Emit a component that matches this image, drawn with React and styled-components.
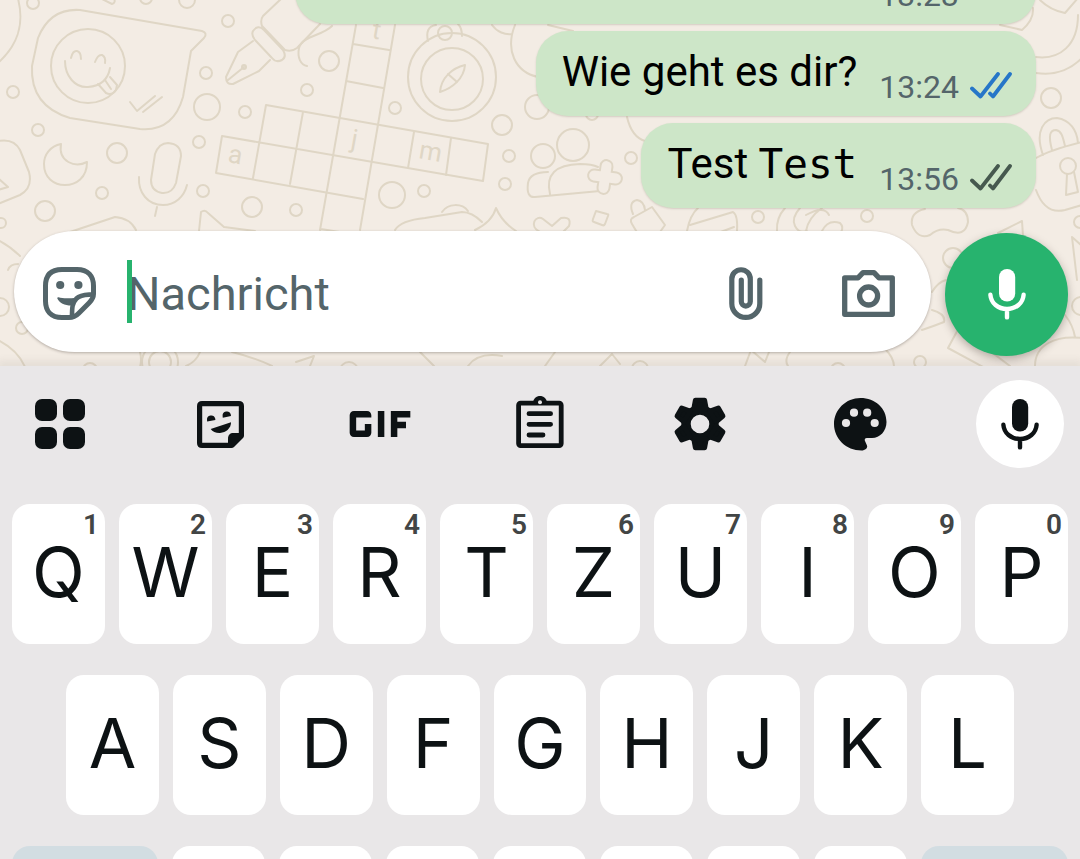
import React from 'react'
import styled, { createGlobalStyle } from 'styled-components'
import { MdGif } from 'react-icons/md'

const colors = {
  wallpaper: '#f3ece4',
  doodle: '#dfd6c5',
  bubble: '#cde6c8',
  grey: '#54656a',
  read: '#2676c8',
  green: '#27b36e',
  keyboard: '#e9e7e8',
  special: '#d2dde2',
  ink: '#0d1214',
}

const GlobalStyle = createGlobalStyle`
  * {
    box-sizing: border-box;
  }
  body {
    margin: 0;
    font-family: Roboto, "Liberation Sans", sans-serif;
  }
  button {
    padding: 0;
    border: 0;
    background: none;
    font-family: inherit;
    cursor: pointer;
  }
  svg {
    display: block;
    flex: none;
  }
`

const Screen = styled.main`
  display: flex;
  flex-direction: column;
  height: 100vh;
  overflow: hidden;
`

const Chat = styled.section`
  position: relative;
  flex: none;
  overflow: hidden;
  background: ${colors.wallpaper};
`

const Wallpaper = styled.svg`
  position: absolute;
  top: 0;
  left: 0;
  fill: none;
  stroke: ${colors.doodle};
  stroke-width: 2;
  stroke-linecap: round;
  stroke-linejoin: round;
`

const DoodleLetter = styled.text`
  fill: ${colors.doodle};
  stroke: none;
  font-size: 26px;
`

const Messages = styled.div`
  position: relative;
  display: flex;
  flex-direction: column;
  justify-content: flex-end;
  align-items: flex-end;
  gap: 7px;
  height: 231px;
  padding: 0 44px 23px;
  overflow: hidden;
`

const Bubble = styled.article`
  display: flex;
  flex: none;
  justify-content: flex-end;
  gap: 22px;
  width: ${(props) => (props.$long ? '741px' : 'auto')};
  height: 85px;
  padding: 16px 24px 0 26px;
  border-radius: 32px;
  background: ${colors.bubble};
  box-shadow: 0 1px 2px rgba(90, 80, 60, 0.2);
`

const BubbleText = styled.p`
  margin: 0;
  color: #000;
  font-size: 42px;
  line-height: 49px;
`

const Mono = styled.code`
  font-family: "DejaVu Sans Mono", monospace;
  font-size: 41px;
  line-height: 0;
`

const Meta = styled.div`
  display: flex;
  gap: 11px;
  padding-top: 21px;
  color: ${colors.grey};
`

const Time = styled.time`
  font-size: 32px;
  line-height: 38px;
`

const TickSlot = styled.span`
  width: 42px;
  padding-top: 4px;
  color: ${(props) => (props.$read ? colors.read : '#46594f')};
`

const Composer = styled.form`
  position: relative;
  display: flex;
  align-items: flex-start;
  gap: 14px;
  padding: 0 12px 10px 14px;
`

const Pill = styled.div`
  display: flex;
  flex: 1;
  align-items: center;
  height: 121px;
  padding: 4px 36px 0 29px;
  border-radius: 61px;
  background: #fff;
  box-shadow: 0 1px 3px rgba(60, 50, 40, 0.35);
`

const Field = styled.label`
  position: relative;
  flex: 1;
  margin: 0 31px;
`

const Caret = styled.span`
  position: absolute;
  top: -2px;
  left: 0;
  width: 5px;
  height: 63px;
  background: ${colors.green};
`

const TextInput = styled.input`
  display: block;
  width: 100%;
  height: 63px;
  padding: 0;
  border: 0;
  outline: 0;
  background: none;
  color: ${colors.ink};
  font-family: inherit;
  font-size: 47px;

  &::placeholder {
    color: ${colors.grey};
    opacity: 1;
  }
`

const PillButton = styled.button`
  color: ${colors.grey};

  & + & {
    margin-left: 79px;
  }
`

const RoundButton = styled.button`
  display: flex;
  flex: none;
  align-items: center;
  justify-content: center;
  width: 123px;
  height: 123px;
  margin-top: 2px;
  border-radius: 50%;
  background: ${colors.green};
  color: #fff;
  box-shadow: 0 3px 8px rgba(60, 50, 40, 0.35);
`

const Keyboard = styled.section`
  position: relative;
  flex: 1;
  min-height: 0;
  overflow: hidden;
  background: ${colors.keyboard};
`

const KeyboardShadow = styled.div`
  position: relative;
  box-shadow: 0 0 10px 3px rgba(90, 80, 80, 0.16);
`

const Toolbar = styled.div`
  display: flex;
  justify-content: space-between;
  padding: 14px 16px 36px;
`

const Tool = styled.button`
  display: flex;
  align-items: center;
  justify-content: center;
  width: 88px;
  height: 88px;
  border-radius: 50%;
  background: ${(props) => (props.$active ? '#fff' : 'none')};
  color: ${colors.ink};
`

const Rows = styled.div`
  display: flex;
  flex-direction: column;
  gap: 31px;
`

const Row = styled.div`
  display: flex;
  gap: 14px;
  padding: 0 ${(props) => (props.$inset ? 'calc(5% + 12px)' : '12px')};
`

const Key = styled.button`
  position: relative;
  flex: ${(props) => (props.$wide ? 1.575 : 1)} 1 0;
  min-width: 0;
  height: 140px;
  padding-bottom: 4px;
  border-radius: 18px;
  background: ${(props) => (props.$wide ? colors.special : '#fff')};
  color: ${colors.ink};
  font-family: Inter, Roboto, sans-serif;
  font-size: 69px;
  line-height: 1;
`

const Hint = styled.span`
  position: absolute;
  top: 9px;
  right: 6px;
  color: #424545;
  font-family: Roboto, sans-serif;
  font-size: 28px;
  font-weight: 600;
  line-height: 24px;
`

const circles = [
  [33, 3, 6], [146, -2, 6], [187, 0, 8], [228, 21, 6], [206, 73, 6], [13, 92, 6],
  [329, 61, 10], [307, 90, 6], [207, 107, 13], [245, 112, 6], [199, 142, 6], [38, 130, 6],
  [117, 153, 10], [102, 193, 6], [45, 211, 10], [203, 191, 6], [252, 207, 10], [296, 210, 6],
  [1, 223, 5], [88, 66, 37], [244, 67, 2], [452, 77, 44], [452, 79, 31], [445, 33, 7],
  [395, 108, 6], [502, 125, 10], [509, 156, 6], [505, 184, 6], [392, 195, 13], [424, 191, 6],
  [537, 107, 12], [592, 114, 6], [543, 156, 12], [573, 145, 16], [631, 158, 6], [758, 217, 6],
  [867, 216, 6], [953, 258, 10], [1051, 98, 10], [1068, 166, 8], [1080, 222, 6], [1081, 306, 9],
  [0, 307, 9], [22, 328, 6], [160, 362, 18], [160, 362, 11], [920, 362, 6], [90, 370, 7],
  [838, 370, 7], [349, 371, 9], [640, 369, 8],
]

const doodles = [
  // emoji bubble
  'M80 10L202 31Q208 33 204 38L191 51L183 97Q173 132 140 129L70 118Q30 106 32 66L38 38Q50 8 80 10Z',
  'M65 61C65 76 75 88 88 87C100 86 108 80 110 68',
  'M71 58q2-8 6-7q4 1 4 8M95 62q3-8 7-7q4 2 3 8',
  'M98 84l8 9q6 3 10-3l1-5l-7-8M105 80l6 9',
  'M130 102L137 111L155 96M143 112L162 97',
  'M17-5C26 25 17 46-2 63M100-2l12 6q4-1 2-6',
  // fountain pen
  'M282-2L263 16Q260 20 262 26L285 50Q292 52 297 48L320 24',
  'M253 31q5-7 11-1l19 20q4 7-1 10q-6 3-10-2l-17-18q-4-5-2-9',
  'M253 41L238 52L226 77Q226 85 233 84L259 71L270 60M228 80L244 67',
  'M332 26C322 36 302 36 299 48C297 58 301 65 307 66',
  // moon, mic, card
  'M61 144C50 146 44 155 44 164C44 178 54 185 65 185C76 185 87 178 87 162C75 168 58 162 61 144Z',
  'M155 154Q159 143 168 143Q181 144 181 156L176 183Q172 194 162 193Q151 191 151 180Z',
  'M139 177C138 193 148 205 163 205C175 205 184 197 187 185M157 207L155 216',
  'M-2 141Q14 138 20 150L29 172Q33 188 20 195L-2 204M-2 178l10 9l-10 3',
  // crossword
  'M253 178L266 105L488 144L483 181L222 136L216 173L363 199M303 112L290 184',
  'M356 25L320 230M395 25L360 230M353 44L389 50M346 81L383 88M414 132L408 168M451 138L446 175M321 229L358 235',
  // compass
  'M440 92C441 78 452 68 465 65C464 78 453 88 440 92ZM448 74l9 8M428 41C426 32 428 26 436 25M462 36Q462 28 458 24',
  'M492 25C497 32 505 35 512 34M515 25C505 50 515 72 538 77M548 25l25 6',
  // group of people
  'M548 172Q530 172 528 183Q526 198 535 197L600 191M550 194Q543 165 580 164Q592 164 598 167',
  'M627 117C630 130 635 138 645 141',
  // strip above the message field
  'M395 230C400 222 415 219 425 218L462 212Q472 212 482 222M442 212C448 203 462 203 468 211',
  'M475 230Q492 222 496 208Q502 222 516 231',
  'M540 232C528 226 536 214 543 219L552 226L561 218Q572 216 569 226l-6 6',
  'M596 211l11 3q2 0 1 2l-3 8q-1 2-3 1l-8-3q-2 0-1-3Z',
  'M633 214Q628 202 637 200Q644 201 645 210M638 234l-6-10Q629 219 634 217L652 207L665 225L660 232',
  'M698 208Q690 215 687 231M690 225L733 212Q738 215 737 231M710 236l24-9',
  'M785 208Q776 218 777 231M800 208Q791 218 795 226q4 8 12 5M822 208Q808 218 806 231M806 215q18-10 23 0M822 231q6-12 18-8q4 4 1 9',
  'M925 209Q910 212 912 225Q918 240 930 235Q938 228 948 230Q965 238 968 222Q968 210 958 208',
  'M70 232Q100 222 115 217Q130 218 136 230M199 231L201 212Q205 209 208 213L224 227L255 231',
  // right edge
  'M1036 57C1060 60 1078 45 1078 15M1036 73C1055 76 1070 70 1082 58M1040 0Q1050 10 1065 13L1078-2M1000 25l22 5q12-10 11-22',
  'M1036 158Q1050 150 1082 142M1036 190Q1045 215 1065 210L1082 205M1043 155C1034 130 1045 118 1057 118C1070 120 1077 130 1078 143',
  'M1052 150C1048 135 1050 130 1056 130C1062 131 1063 138 1065 146M1067 174l-1 21l12-3l-4-20',
  'M998 233L1022 221L1023 236M1082 246L1072 237L1077 280',
  'M932 292Q938 282 946 280M932 310q14 4 12 12q-10 4-22 8M948 348L962 322M948 348L985 368M962 330L1010 366',
  'M1035 366C1035 345 1055 335 1082 338M1065 315q8 10 10 22M886 350q8 8 8 17',
  // around the message field
  'M-2 240Q10 246 20 256M8 270Q10 264 18 264M-2 340Q18 350 25 367M140 352q2 8 0 15M200 352q-4 10-14 14M232 352q24 6 40 14M296 362l18-6l-4 10',
  'M420 352l14 14M468 366q10-14 34-10M555 352l-10 14M600 366l12-12l8 10M745 366l6-16l14 12l4-10M790 352q-6 8-2 14',
]

const Doodles = () => (
  <Wallpaper width="1080" height="366" viewBox="0 0 1080 366" aria-hidden="true">
    {circles.map(([cx, cy, r]) => (
      <circle key={`${cx}-${cy}-${r}`} cx={cx} cy={cy} r={r} />
    ))}
    {doodles.map((d) => (
      <path key={d} d={d} />
    ))}
    <g transform="rotate(8 605 177)">
      <path d="M605 166V188M594 177H616" strokeWidth="14" style={{ strokeWidth: 14 }} />
      <path d="M605 166V188M594 177H616" style={{ strokeWidth: 10, stroke: colors.wallpaper }} />
    </g>
    <DoodleLetter transform="translate(227 162) rotate(10)">a</DoodleLetter>
    <DoodleLetter transform="translate(350 147) rotate(10)">j</DoodleLetter>
    <DoodleLetter transform="translate(418 158) rotate(10)">m</DoodleLetter>
    <DoodleLetter transform="translate(371 38) rotate(10)">t</DoodleLetter>
  </Wallpaper>
)

const Ticks = () => (
  <svg width="42" height="27" viewBox="0 0 42 27" fill="none" stroke="currentColor" strokeWidth="3.8" strokeLinecap="round" strokeLinejoin="round">
    <path d="M2 16.5L10.5 24.5L28 2M20 21.5L23 24.5L40 2" />
  </svg>
)

const MicIcon = () => (
  <svg width="38" height="51" viewBox="0 0 38 51" fill="none" stroke="currentColor" strokeWidth="4.4" strokeLinecap="round">
    <rect x="11" y="0" width="16.2" height="32.5" rx="8.1" fill="currentColor" stroke="none" />
    <path d="M2.4 25.8C3 34 10 40 19 40S35 34 35.6 25.8M19 40V48.4" />
  </svg>
)

const EmojiStickerIcon = () => (
  <svg width="53" height="53" viewBox="0 0 53 53" fill="none" stroke="currentColor" strokeWidth="5" strokeLinejoin="round">
    <path d="M19 2.5H34C45 2.5 50.5 9 50.5 19V27C50.5 31 49 33 46 36L35.5 46.5C32 50 30 50.5 26 50.5H19C8 50.5 2.5 44 2.5 34V19C2.5 8 8 2.5 19 2.5Z" />
    <path d="M50.5 27.3C44 28 38 27 33.5 31.5C29 36 29 41 29 50" strokeWidth="4.6" />
    <path d="M15.5 30.2C20 31.6 26 31.6 34 30.4L29 38.4C22 38.6 16.5 36 14.3 31.4Q14.2 30 15.5 30.2Z" fill="currentColor" stroke="none" />
    <circle cx="17.2" cy="18" r="4.1" fill="currentColor" stroke="none" />
    <circle cx="35.4" cy="18" r="4.1" fill="currentColor" stroke="none" />
  </svg>
)

const ClipIcon = () => (
  <svg width="34" height="53" viewBox="0 0 34 53" fill="none" stroke="currentColor" strokeWidth="5.2" strokeLinecap="round">
    <path d="M30.8 13.2V36.4A14 14 0 0 1 2.8 36.4V12A9.2 9.2 0 0 1 21.3 12V34.6A4.5 4.5 0 0 1 12.3 34.6V13.2" />
  </svg>
)

const CameraIcon = () => (
  <svg width="53" height="47" viewBox="0 0 53 47" fill="none" stroke="currentColor" strokeWidth="5.3" strokeLinejoin="round">
    <path d="M2.7 7.8H16L21 2.7H32L37 7.8H50.3V44.3H2.7Z" />
    <circle cx="26.6" cy="26" r="9" />
  </svg>
)

const AppsIcon = () => (
  <svg width="50" height="50" viewBox="0 0 50 50" fill="currentColor">
    <rect x="0" y="0" width="22" height="22" rx="7" />
    <rect x="28" y="0" width="22" height="22" rx="7" />
    <rect x="0" y="28" width="22" height="22" rx="7" />
    <rect x="28" y="28" width="22" height="22" rx="7" />
  </svg>
)

const StickerIcon = () => (
  <svg width="47" height="47" viewBox="0 0 47 47" fill="currentColor">
    <path d="M44.4 33V5Q44.4 2.6 42 2.6H5Q2.6 2.6 2.6 5V42Q2.6 44.4 5 44.4H33" fill="none" stroke="currentColor" strokeWidth="5.2" />
    <path d="M47 32V34.5Q47 36 46 37L37 46Q36 47 34.5 47H31V37.5C31 34 33 32 36.5 32Z" />
    <path d="M10.2 20.6L10 19A4.2 4.2 0 0 1 18.2 17.4L18.4 19ZM25.8 16.8L25.6 15A4.2 4.2 0 0 1 33.8 13.4L34 15Z" />
    <path d="M13.7 28L34 21.2C34.2 27 29 31.5 23 31.9C19 32 15.5 31 13.7 28Z" />
  </svg>
)

const ClipboardIcon = () => (
  <svg width="48" height="56" viewBox="0 -2 48 56" fill="none" stroke="currentColor" strokeWidth="4.8" strokeLinecap="round">
    <rect x="2.6" y="5.2" width="42.6" height="42.4" rx="2" />
    <path d="M13 15.7H34.6M13 26.3H34.6M13 37H27" />
    <path d="M16.9 5A7.1 7.1 0 0 1 31.1 5Z" fill="currentColor" stroke="none" />
    <circle cx="24" cy="4.2" r="2" fill={colors.keyboard} stroke="none" />
  </svg>
)

const GearIcon = () => (
  <svg width="54" height="54" viewBox="-27 -27 54 54" fill="currentColor">
    <circle r="14" fill="none" stroke="currentColor" strokeWidth="9.4" />
    {[0, 60, 120, 180, 240, 300].map((angle) => (
      <path key={angle} transform={`rotate(${angle})`} d="M-4.6-23.8H4.6L6.2-15H-6.2Z" stroke="currentColor" strokeWidth="5" strokeLinejoin="round" />
    ))}
  </svg>
)

const PaletteIcon = () => (
  <svg width="53" height="53" viewBox="0 0 53 53" fill="currentColor">
    <path d="M26.5 0C41 0 52.5 10 52.5 24C52.5 33 46 40 38 40H34C31 39.5 30.2 41 31 43L33 47.5C34 50 31 52.5 27.5 52.5C12 52.5 0 40.5 0 26C0 11.5 12 0 26.5 0Z" />
    <g fill={colors.keyboard}>
      <circle cx="12" cy="25" r="4.1" />
      <circle cx="20" cy="14.7" r="4.1" />
      <circle cx="33.2" cy="14.7" r="4.1" />
      <circle cx="40.7" cy="25" r="4.1" />
    </g>
  </svg>
)

const Message = ({ time, status, long, children }) => (
  <Bubble $long={long}>
    {children && <BubbleText>{children}</BubbleText>}
    <Meta>
      <Time>{time}</Time>
      <TickSlot $read={status === 'read'}>{status && <Ticks />}</TickSlot>
    </Meta>
  </Bubble>
)

const tools = [
  { label: 'Menü', icon: <AppsIcon /> },
  { label: 'Sticker', icon: <StickerIcon /> },
  { label: 'GIF', icon: <MdGif size={104} /> },
  { label: 'Zwischenablage', icon: <ClipboardIcon /> },
  { label: 'Einstellungen', icon: <GearIcon /> },
  { label: 'Design', icon: <PaletteIcon /> },
  { label: 'Spracheingabe', icon: <MicIcon />, active: true },
]

const topRow = 'QWERTZUIOP'.split('')
const middleRow = 'ASDFGHJKL'.split('')
const bottomRow = 'YXCVBNM'.split('')

export default function App() {
  return (
    <Screen>
      <GlobalStyle />
      <Chat>
        <Doodles />
        <Messages>
          <Message time="13:23" long />
          <Message time="13:24" status="read">Wie geht es dir?</Message>
          <Message time="13:56" status="delivered">
            Test <Mono>Test</Mono>
          </Message>
        </Messages>
        <Composer>
          <Pill>
            <PillButton type="button" aria-label="Emoji"><EmojiStickerIcon /></PillButton>
            <Field>
              <TextInput type="text" placeholder="Nachricht" aria-label="Nachricht" />
              <Caret />
            </Field>
            <PillButton type="button" aria-label="Anhang"><ClipIcon /></PillButton>
            <PillButton type="button" aria-label="Kamera"><CameraIcon /></PillButton>
          </Pill>
          <RoundButton type="button" aria-label="Sprachnachricht"><MicIcon /></RoundButton>
        </Composer>
      </Chat>
      <KeyboardShadow />
      <Keyboard>
        <Toolbar>
          {tools.map((tool) => (
            <Tool key={tool.label} aria-label={tool.label} $active={tool.active}>
              {tool.icon}
            </Tool>
          ))}
        </Toolbar>
        <Rows>
          <Row>
            {topRow.map((letter, i) => (
              <Key key={letter}>
                {letter}
                <Hint>{(i + 1) % 10}</Hint>
              </Key>
            ))}
          </Row>
          <Row $inset>
            {middleRow.map((letter) => (
              <Key key={letter}>{letter}</Key>
            ))}
          </Row>
          <Row>
            <Key $wide aria-label="Umschalttaste" />
            {bottomRow.map((letter) => (
              <Key key={letter} aria-label={letter} />
            ))}
            <Key $wide aria-label="Löschen" />
          </Row>
        </Rows>
      </Keyboard>
    </Screen>
  )
}
